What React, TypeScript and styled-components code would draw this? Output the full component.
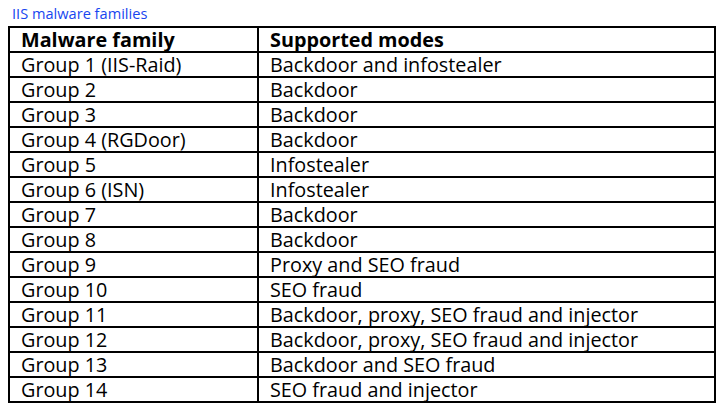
import React from "react";
import styled, { createGlobalStyle } from "styled-components";

const Global = createGlobalStyle`
  html, body { margin: 0; padding: 0; background: #fff; }
  body { font-family: "Open Sans", "Noto Sans", sans-serif; }
`;

const Page = styled.div`
  width: 728px;
  height: 409px;
  padding: 3px 0 0 8px;
  box-sizing: border-box;
  overflow: hidden;
`;

const Title = styled.div`
  color: #1746f0;
  font-size: 14.6px;
  line-height: 20px;
  padding-left: 4px;
  height: 23px;
`;

const Table = styled.table`
  border-collapse: collapse;
  width: 708px;
  color: #000;
  border: 2px solid #000;
`;

const Row = styled.tr`
  height: 25px;
`;

const Cell = styled.td<{ $head?: boolean }>`
  border: 2px solid #000;
  padding: 0 0 0 11px;
  font-size: 19.8px;
  line-height: 21px;
  font-weight: ${(p) => (p.$head ? 700 : 400)};
  white-space: nowrap;
  vertical-align: middle;
`;

const FirstCol = styled(Cell)`
  width: 236px;
`;

const rows: [string, string][] = [
  ["Group 1 (IIS-Raid)", "Backdoor and infostealer"],
  ["Group 2", "Backdoor"],
  ["Group 3", "Backdoor"],
  ["Group 4 (RGDoor)", "Backdoor"],
  ["Group 5", "Infostealer"],
  ["Group 6 (ISN)", "Infostealer"],
  ["Group 7", "Backdoor"],
  ["Group 8", "Backdoor"],
  ["Group 9", "Proxy and SEO fraud"],
  ["Group 10", "SEO fraud"],
  ["Group 11", "Backdoor, proxy, SEO fraud and injector"],
  ["Group 12", "Backdoor, proxy, SEO fraud and injector"],
  ["Group 13", "Backdoor and SEO fraud"],
  ["Group 14", "SEO fraud and injector"],
];

export default function App() {
  return (
    <Page>
      <Global />
      <Title>IIS malware families</Title>
      <Table>
        <tbody>
          <Row>
            <FirstCol $head>Malware family</FirstCol>
            <Cell $head>Supported modes</Cell>
          </Row>
          {rows.map(([a, b]) => (
            <Row key={a}>
              <FirstCol>{a}</FirstCol>
              <Cell>{b}</Cell>
            </Row>
          ))}
        </tbody>
      </Table>
    </Page>
  );
}
